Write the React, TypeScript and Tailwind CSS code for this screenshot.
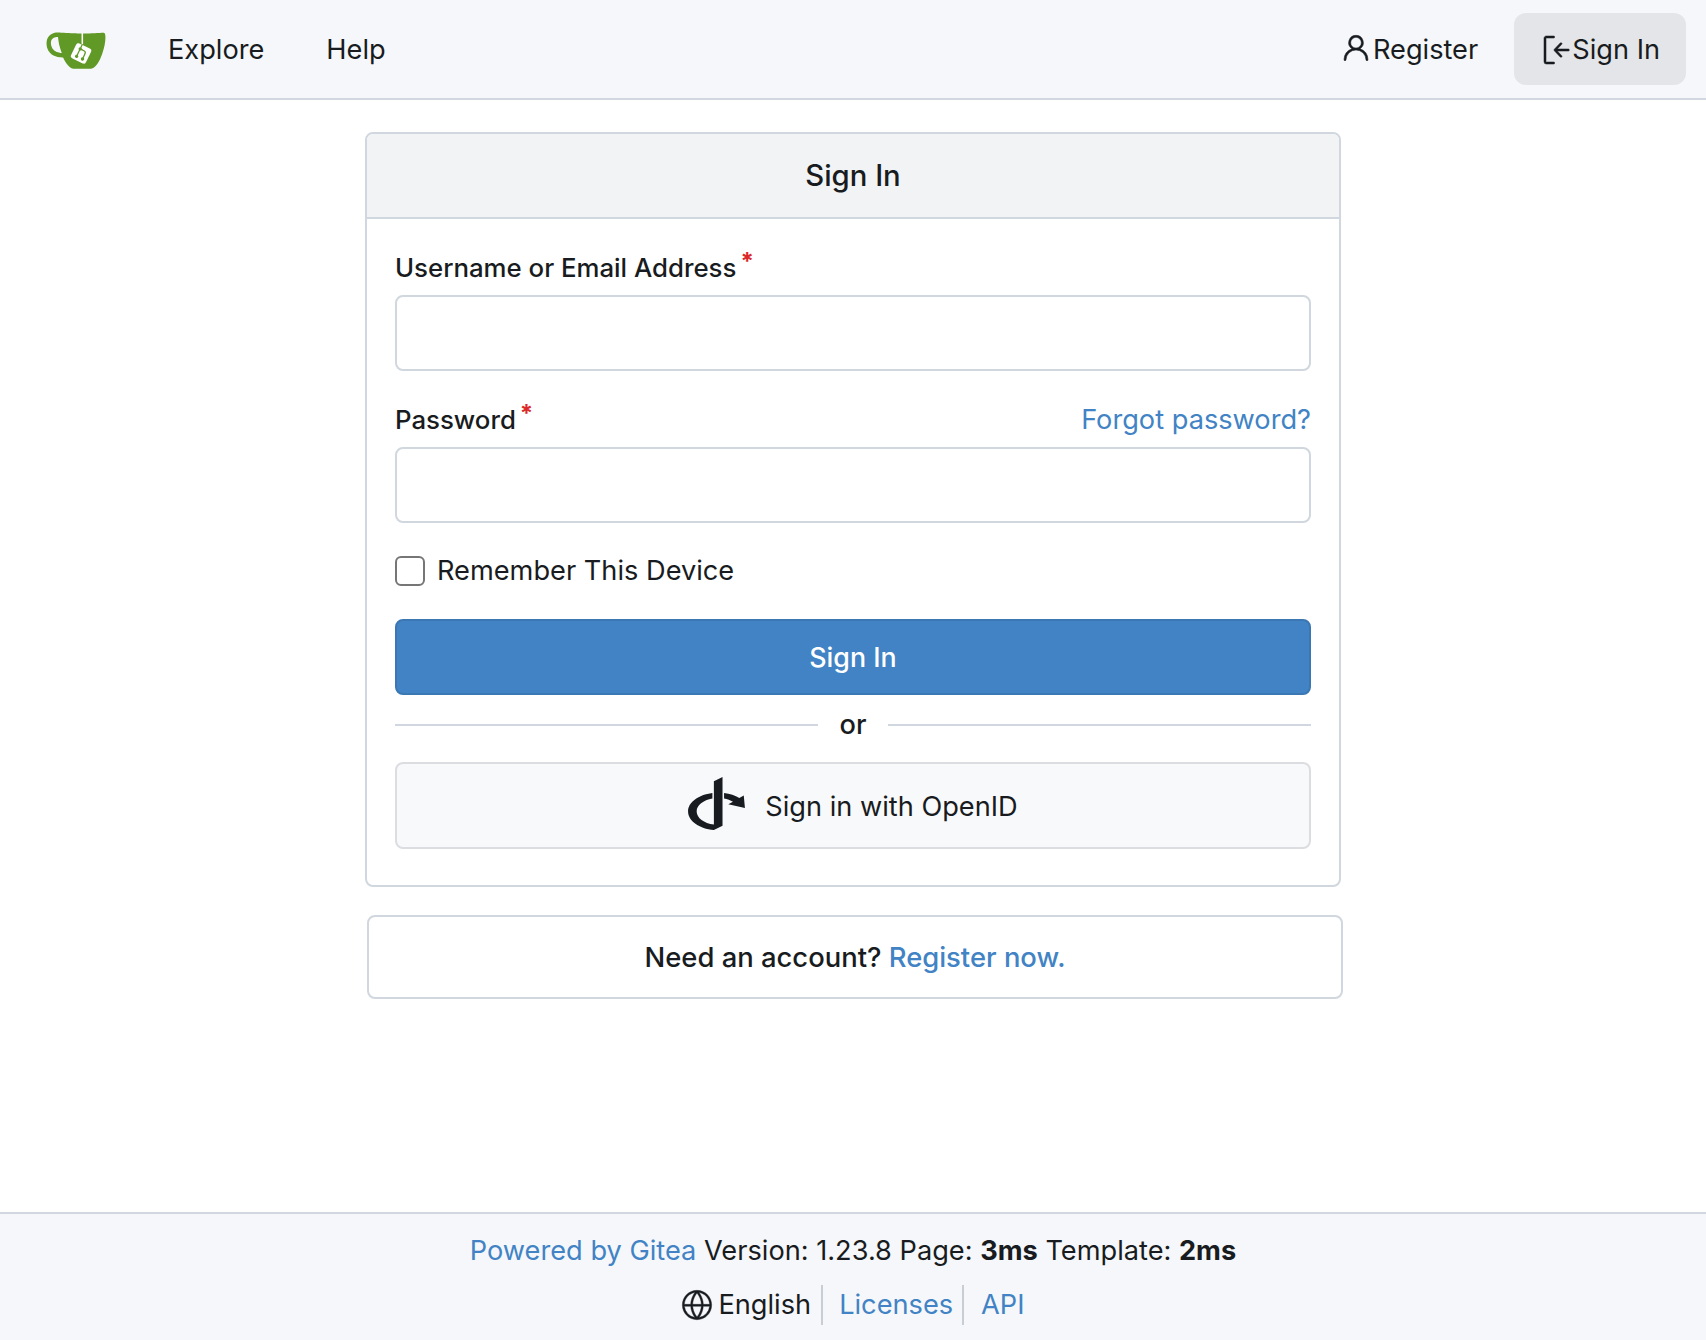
import React from "react";
import { GoGlobe, GoPerson, GoSignIn } from "react-icons/go";
import { FaOpenid } from "react-icons/fa";

const GiteaLogo: React.FC = () => (
  <svg viewBox="0 0 640 640" className="w-[60px] h-[60px]">
    <path
      fill="#fff"
      d="m395.9 484.2-126.9-61c-12.5-6-17.9-21.2-11.8-33.8l61-126.9c6-12.5 21.2-17.9 33.8-11.8 17.2 8.3 27.1 13 27.1 13l-.1-109.2 16.7-.1.1 117.1s57.4 24.2 83.1 40.1c3.7 2.3 10.2 6.8 12.9 14.4 2.1 6.1 2 13.1-1 19.3l-61 126.9c-6.2 12.7-21.4 18.1-33.9 12"
    />
    <path
      fill="#609926"
      d="M622.7 149.8c-4.1-4.1-9.6-4-9.6-4s-117.2 6.6-177.9 8c-13.3.3-26.5.6-39.6.7v117.2c-5.5-2.6-11.1-5.3-16.6-7.9 0-36.4-.1-109.2-.1-109.2-29 .4-89.2-2.2-89.2-2.2s-141.4-7.1-156.8-8.5c-9.8-.6-22.5-2.1-39 1.5-8.7 1.8-33.5 7.4-53.8 26.9C-4.9 212.4 6.6 276.2 8 285.8c1.7 11.7 6.9 44.2 31.7 72.5 45.8 56.1 144.4 54.8 144.4 54.8s12.1 28.9 30.6 55.5c25 33.1 50.7 58.9 75.7 62 63 0 188.9-.1 188.9-.1s12 .1 28.3-10.3c14-8.5 26.5-23.4 26.5-23.4S547 483 565 451.5c5.5-9.7 10.1-19.1 14.1-28 0 0 55.2-117.1 55.2-231.1-1.1-34.5-9.6-40.6-11.6-42.6M125.6 353.9c-25.9-8.5-36.9-18.7-36.9-18.7S69.6 321.8 60 295.4c-16.5-44.2-1.4-71.2-1.4-71.2s8.4-22.5 38.5-30c13.8-3.7 31-3.1 31-3.1s7.1 59.4 15.7 94.2c7.2 29.2 24.8 77.7 24.8 77.7s-26.1-3.1-43-9.1m300.3 107.6s-6.1 14.5-19.6 15.4c-5.8.4-10.3-1.2-10.3-1.2s-.3-.1-5.3-2.1l-112.9-55s-10.9-5.7-12.8-15.6c-2.2-8.1 2.7-18.1 2.7-18.1L322 273s4.8-9.7 12.2-13c.6-.3 2.3-1 4.5-1.5 8.1-2.1 18 2.8 18 2.8L467.4 315s12.6 5.7 15.3 16.2c1.9 7.4-.5 14-1.8 17.2-6.3 15.4-55 113.1-55 113.1"
    />
    <path
      fill="#609926"
      d="M326.8 380.1c-8.2.1-15.4 5.8-17.3 13.8s2 16.3 9.1 20c7.7 4 17.5 1.8 22.7-5.4 5.1-7.1 4.3-16.9-1.8-23.1l24-49.1c1.5.1 3.7.2 6.2-.5 4.1-.9 7.1-3.6 7.1-3.6 4.2 1.8 8.6 3.8 13.2 6.1 4.8 2.4 9.3 4.9 13.4 7.3.9.5 1.8 1.1 2.8 1.9 1.6 1.3 3.4 3.1 4.7 5.5 1.9 5.5-1.9 14.9-1.9 14.9-2.3 7.6-18.4 40.6-18.4 40.6-8.1-.2-15.3 5-17.7 12.5-2.6 8.1 1.1 17.3 8.9 21.3s17.4 1.7 22.5-5.3c5-6.8 4.6-16.3-1.1-22.6 1.9-3.7 3.7-7.4 5.6-11.3 5-10.4 13.5-30.4 13.5-30.4.9-1.7 5.7-10.3 2.7-21.3-2.5-11.4-12.6-16.7-12.6-16.7-12.2-7.9-29.2-15.2-29.2-15.2s0-4.1-1.1-7.1c-1.1-3.1-2.8-5.1-3.9-6.3 4.7-9.7 9.4-19.3 14.1-29-4.1-2-8.1-4-12.2-6.1-4.8 9.8-9.7 19.7-14.5 29.5-6.7-.1-12.9 3.5-16.1 9.4-3.4 6.3-2.7 14.1 1.9 19.8z"
    />
  </svg>
);

const Field: React.FC<{ label: string; forgot?: boolean }> = ({ label, forgot }) => (
  <div>
    <div className="flex justify-between items-center h-[40px] mb-[7px] leading-[40px]">
      <label className="font-medium text-[25.8px] text-[#181c21]">
        {label}
        <span className="relative -top-[7px] ml-[4px] text-[#db2828] font-bold text-[24px] leading-none">*</span>
      </label>
      {forgot ? (
        <a className="text-[#4183c4]" href="#">
          Forgot password?
        </a>
      ) : null}
    </div>
    <input className="block w-full h-[76px] bg-white border-2 border-[#d0d7de] rounded-lg outline-none" />
  </div>
);

export default function App() {
  return (
    <div className="min-h-screen flex flex-col bg-white text-[#181c21] text-[27.2px] font-['Inter',sans-serif]">
      <nav className="h-[100px] flex items-center justify-between bg-[#f6f7fa] border-b-2 border-[#d0d7de] pl-[46px] pr-[20px]">
        <div className="flex items-center">
          <GiteaLogo />
          <a className="ml-[62px] pt-[2px]" href="#">
            Explore
          </a>
          <a className="ml-[62px] pt-[2px]" href="#">
            Help
          </a>
        </div>
        <div className="flex items-center">
          <a className="flex items-center pt-[2px]" href="#">
            <GoPerson size={32} stroke="currentColor" strokeWidth={0.4} className="-mt-[3px] mr-[1px]" />
            Register
          </a>
          <a className="flex items-center ml-[36px] h-[72px] pt-[2px] px-[26px] rounded-xl bg-[#e4e5e8]" href="#">
            <GoSignIn size={32} stroke="currentColor" strokeWidth={0.4} />
            Sign In
          </a>
        </div>
      </nav>

      <main className="flex-1 flex flex-col items-center pt-[32px]">
        <div className="w-[976px] border-2 border-[#d0d7de] rounded-lg overflow-hidden">
          <h2 className="h-[85px] flex items-center justify-center bg-[#f1f3f5] border-b-2 border-[#d0d7de] font-medium text-[29.3px]">
            Sign In
          </h2>
          <form className="flex flex-col px-[28px] pt-[29px] pb-[36px]">
            <Field label="Username or Email Address" />
            <div className="mt-[29px]">
              <Field label="Password" forgot />
            </div>
            <label className="flex items-center gap-[12px] mt-[33px] h-[30px]">
              <span className="w-[30px] h-[30px] rounded-md border-2 border-[#767676] bg-white" />
              <span>Remember This Device</span>
            </label>
            <button
              type="button"
              className="mt-[33px] h-[76px] bg-[#4183c4] border-2 border-[#3b77b3] rounded-lg text-white font-medium text-[26.8px]"
            >
              Sign In
            </button>
            <div className="flex items-center gap-[22px] h-[40px] mt-[10px] mb-[17px] font-medium">
              <div className="flex-1 h-[2px] bg-[#d0d7de]" />
              <span>or</span>
              <div className="flex-1 h-[2px] bg-[#d0d7de]" />
            </div>
            <button
              type="button"
              className="flex items-center justify-center gap-[16px] h-[87px] pr-[4px] bg-[#f8f9fb] border-2 border-[#dcdde0] rounded-lg"
            >
              <FaOpenid size={65} className="-mt-[4px]" />
              <span className="pt-[4px]">Sign in with OpenID</span>
            </button>
          </form>
        </div>
        <div className="ml-[4px] mt-[28px] w-[976px] h-[84px] pt-[2px] flex items-center justify-center border-2 border-[#d0d7de] rounded-lg font-medium text-[27.4px]">
          <span>
            Need an account?{" "}
            <a className="text-[#4183c4]" href="#">
              Register now.
            </a>
          </span>
        </div>
      </main>

      <footer className="h-[128px] flex flex-col items-center bg-[#f6f7fa] border-t-2 border-[#d0d7de] pt-[17px]">
        <div className="h-[40px] leading-[40px]">
          <a className="text-[#4183c4]" href="#">
            Powered by Gitea
          </a>{" "}
          Version: 1.23.8 Page: <strong className="font-bold">3ms</strong> Template:{" "}
          <strong className="font-bold">2ms</strong>
        </div>
        <div className="flex items-center h-[40px] mt-[14px]">
          <GoGlobe size={32} stroke="currentColor" strokeWidth={0.3} />
          <span className="ml-[5px] pr-[10px] border-r-2 border-[#c9ced4] h-[40px] leading-[40px]">English</span>
          <a className="text-[#4183c4] pl-[16px] pr-[9px] border-r-2 border-[#c9ced4] h-[40px] leading-[40px]" href="#">
            Licenses
          </a>
          <a className="text-[#4183c4] pl-[17px] h-[40px] leading-[40px]" href="#">
            API
          </a>
        </div>
      </footer>
    </div>
  );
}
